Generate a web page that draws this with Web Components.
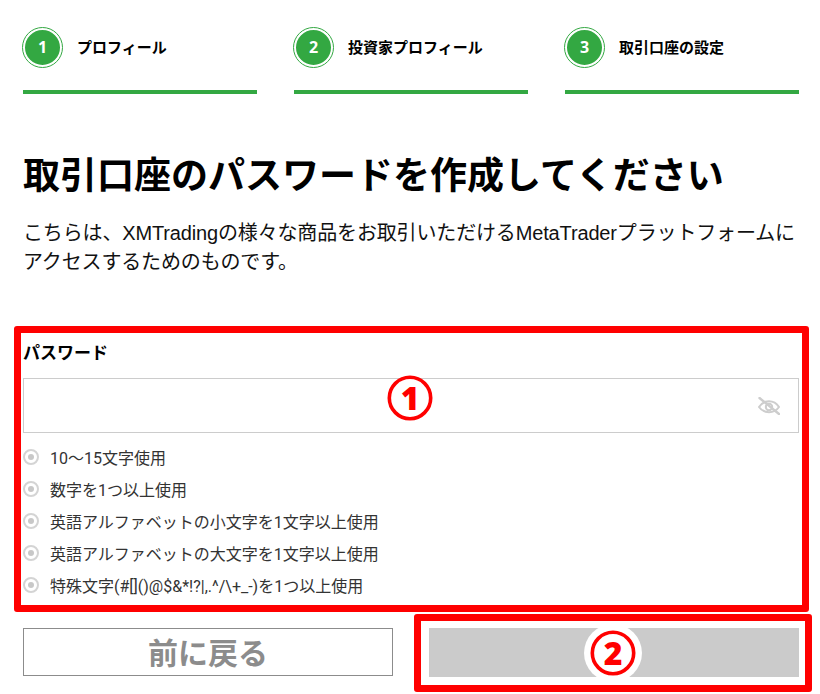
<!DOCTYPE html>
<html lang="ja">
<head>
<meta charset="utf-8">
<title>取引口座の設定</title>
<style>
  html, body { margin: 0; background: #fff; }
  body {
    font-family: Roboto, "Noto Sans CJK JP", sans-serif;
    color: #111;
    overflow: hidden;
  }
  app-page { width: 820px; height: 694px; }
</style>
</head>
<body>
<app-page>
  <step-list slot="steps">
    <step-item number="1">プロフィール</step-item>
    <step-item number="2">投資家プロフィール</step-item>
    <step-item number="3">取引口座の設定</step-item>
  </step-list>

  <h-intro slot="intro" heading="取引口座のパスワードを作成してください">
    こちらは、XMTradingの様々な商品をお取引いただけるMetaTraderプラットフォームにアクセスするためのものです。
  </h-intro>

  <call-out slot="form" mark="1" style="--top:-52px;--right:-10px;--bottom:-11px;--left:-9px;--mark-x:358px;--mark-y:-9px;">
    <password-field label="パスワード">
      <rule-item>10〜15文字使用</rule-item>
      <rule-item>数字を1つ以上使用</rule-item>
      <rule-item>英語アルファベットの小文字を1文字以上使用</rule-item>
      <rule-item>英語アルファベットの大文字を1文字以上使用</rule-item>
      <rule-item>特殊文字(#[]()@$&amp;*!?|,.^/\+_-)を1つ以上使用</rule-item>
    </password-field>
  </call-out>

  <form-actions slot="actions">
    <action-button>前に戻る</action-button>
    <call-out mark="2" halo style="--top:-14px;--right:-13px;--bottom:-15px;--left:-15px;--mark-x:155px;--mark-y:-4px;">
      <action-button disabled></action-button>
    </call-out>
  </form-actions>
</app-page>

<script>
// page shell, everything is stacked by flow
class AppPage extends HTMLElement {
  constructor() {
    super();
    this.attachShadow({ mode: "open" }).innerHTML = `
      <style>
        :host { display: block; box-sizing: border-box; padding: 27px 21px 0 23px; }
        .form { margin-top: 101px; }
        .actions { margin-top: 27px; }
      </style>
      <slot name="steps"></slot>
      <slot name="intro"></slot>
      <div class="form"><slot name="form"></slot></div>
      <div class="actions"><slot name="actions"></slot></div>
    `;
  }
}

class StepList extends HTMLElement {
  constructor() {
    super();
    this.attachShadow({ mode: "open" }).innerHTML = `
      <style>
        :host { display: grid; grid-template-columns: repeat(3, 234px); column-gap: 37px; }
      </style>
      <slot></slot>
    `;
  }
}

class StepItem extends HTMLElement {
  constructor() {
    super();
    this.attachShadow({ mode: "open" }).innerHTML = `
      <style>
        :host { display: block; border-bottom: 4px solid #33a842; padding-bottom: 23px; }
        .head { display: flex; align-items: center; gap: 14px; height: 40px; margin-left: -1px; }
        .num {
          box-sizing: border-box;
          width: 41px; height: 41px;
          flex: none;
          border-radius: 50%;
          background: #33a842;
          border: 3px solid #fff;
          outline: 1.2px solid #33a842;
          outline-offset: -1.2px;
          display: flex; align-items: center; justify-content: center;
          color: #fff;
          font: 700 16px "Open Sans", sans-serif;
        }
        .label { font: 700 15px "Noto Sans CJK JP", sans-serif; color: #000; margin-top: -1px; }
      </style>
      <div class="head">
        <span class="num">${this.getAttribute("number")}</span>
        <span class="label"><slot></slot></span>
      </div>
    `;
  }
}

class HIntro extends HTMLElement {
  constructor() {
    super();
    this.attachShadow({ mode: "open" }).innerHTML = `
      <style>
        :host { display: block; }
        h1 {
          margin: 52px 0 0;
          font: 700 37px/54px "Noto Sans CJK JP", sans-serif;
          color: #000;
          white-space: nowrap;
        }
        p {
          margin: 19px 0 0;
          font: 400 20px/29px "Liberation Sans", "Noto Sans CJK JP", sans-serif;
          letter-spacing: -0.15px;
          color: #111;
        }
      </style>
      <h1>${this.getAttribute("heading")}</h1>
      <p><slot></slot></p>
    `;
  }
}

// red annotation frame with a circled number, drawn over what it wraps
class CallOut extends HTMLElement {
  constructor() {
    super();
    const halo = this.hasAttribute("halo")
      ? `<circle cx="29" cy="29" r="29" fill="#fff"/>`
      : "";
    this.attachShadow({ mode: "open" }).innerHTML = `
      <style>
        :host { display: block; position: relative; }
        .frame {
          position: absolute;
          top: var(--top); right: var(--right); bottom: var(--bottom); left: var(--left);
          border: 7px solid #f00;
          border-radius: 3px;
          pointer-events: none;
        }
        svg { position: absolute; left: var(--mark-x); top: var(--mark-y); width: 58px; height: 58px; }
        text { font: 800 32px "Open Sans", sans-serif; fill: #f00; }
      </style>
      <slot></slot>
      <div class="frame"></div>
      <svg viewBox="0 0 58 58">
        ${halo}
        <circle cx="29" cy="29" r="20.700" fill="#fff" stroke="#f00" stroke-width="3.600"/>
        <text x="29" y="40.500" text-anchor="middle">${this.getAttribute("mark")}</text>
      </svg>
    `;
  }
}

class PasswordField extends HTMLElement {
  constructor() {
    super();
    this.attachShadow({ mode: "open" }).innerHTML = `
      <style>
        :host { display: block; }
        label {
          display: block;
          position: absolute;
          top: -38px;
          font: 700 17px/24px "Noto Sans CJK JP", sans-serif;
          color: #000;
        }
        .box {
          box-sizing: border-box;
          height: 55px;
          border: 1px solid #ccc;
          display: flex;
          align-items: center;
          justify-content: flex-end;
          padding: 0 18px 0 0;
        }
        svg { margin-top: 1px; }
        .rules { display: flex; flex-direction: column; margin-top: 8px; }
      </style>
      <label>${this.getAttribute("label")}</label>
      <div class="box">
        <svg width="22" height="18" viewBox="0 0 22 18" fill="none" stroke="#cdcdcd" stroke-width="2">
          <path d="M1 10c2.400-3.800 6-5.800 10-5.800s7.600 2 10 5.800c-2.400 3.400-6 5.200-10 5.200S3.400 13.400 1 10z"/>
          <circle cx="11" cy="10" r="3.200"/>
          <path d="M1.500 1l19.500 16" stroke-linecap="round" stroke-width="2.400"/>
        </svg>
      </div>
      <div class="rules"><slot></slot></div>
    `;
  }
}

class RuleItem extends HTMLElement {
  constructor() {
    super();
    this.attachShadow({ mode: "open" }).innerHTML = `
      <style>
        :host {
          display: flex;
          align-items: center;
          gap: 11px;
          height: 32px;
          font: 400 16px Roboto, "Noto Sans CJK JP", sans-serif;
          color: #333;
          white-space: nowrap;
        }
        i {
          box-sizing: border-box;
          width: 16px; height: 16px;
          flex: none;
          border: 2px solid #d4d4d4;
          border-radius: 50%;
          display: flex; align-items: center; justify-content: center;
        }
        i::after { content: ""; width: 6px; height: 6px; border-radius: 50%; background: #c8c8c8; }
      </style>
      <i></i><span><slot></slot></span>
    `;
  }
}

class FormActions extends HTMLElement {
  constructor() {
    super();
    this.attachShadow({ mode: "open" }).innerHTML = `
      <style>
        :host { display: grid; grid-template-columns: 370px 370px; column-gap: 36px; }
      </style>
      <slot></slot>
    `;
  }
}

class ActionButton extends HTMLElement {
  constructor() {
    super();
    const off = this.hasAttribute("disabled");
    this.attachShadow({ mode: "open" }).innerHTML = `
      <style>
        :host { display: block; }
        button {
          box-sizing: border-box;
          display: block;
          width: 100%;
          height: ${off ? 49 : 48}px;
          padding: 0 0 3px;
          border: ${off ? "0" : "1px solid #8c8c8c"};
          background: ${off ? "#cbcbcb" : "#fff"};
          color: #8c8c8c;
          font: 700 30px "Noto Sans CJK JP", sans-serif;
        }
      </style>
      <button type="button"><slot></slot></button>
    `;
  }
}

customElements.define("app-page", AppPage);
customElements.define("step-list", StepList);
customElements.define("step-item", StepItem);
customElements.define("h-intro", HIntro);
customElements.define("call-out", CallOut);
customElements.define("password-field", PasswordField);
customElements.define("rule-item", RuleItem);
customElements.define("form-actions", FormActions);
customElements.define("action-button", ActionButton);
</script>
</body>
</html>
